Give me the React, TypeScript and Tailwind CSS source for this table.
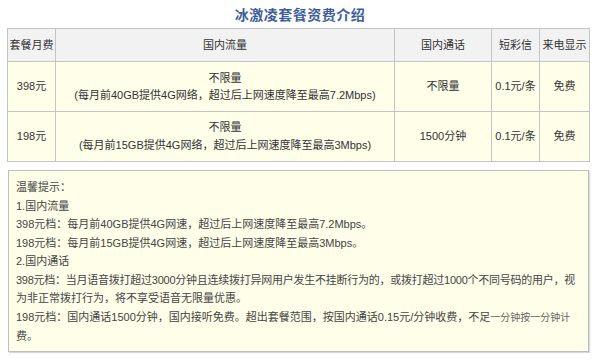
import React from "react";

const font = { fontFamily: '"Liberation Sans", "Noto Sans CJK SC", sans-serif' };

export default function App() {
  const td = "border border-[#c4c4c4] text-center align-middle p-0";
  return (
    <div className="w-[600px] h-[360px] bg-white overflow-hidden text-[11px] text-[#333]" style={font}>
      <div className="h-[28px] flex items-center justify-center pt-[0px]">
        <span className="text-[14px] font-bold text-[#3d5d9c] tracking-[0.5px]" style={{ fontFamily: '"Noto Sans CJK SC", serif' }}>
          冰激凌套餐资费介绍
        </span>
      </div>
      <table className="ml-[7px] border-collapse table-fixed w-[582px]">
        <colgroup>
          <col className="w-[48px]" />
          <col className="w-[339px]" />
          <col className="w-[97px]" />
          <col className="w-[48px]" />
          <col className="w-[50px]" />
        </colgroup>
        <tbody>
          <tr className="h-[33px] bg-[#f2f2f2]">
            <td className={td}>套餐月费</td>
            <td className={td}>国内流量</td>
            <td className={td}>国内通话</td>
            <td className={td}>短彩信</td>
            <td className={td}>来电显示</td>
          </tr>
          <tr className="h-[50px] bg-[#fefee9]">
            <td className={td}>398元</td>
            <td className={`${td} leading-[16.5px]`}>
              <div>不限量</div>
              <div>(每月前40GB提供4G网络，超过后上网速度降至最高7.2Mbps)</div>
            </td>
            <td className={td}>不限量</td>
            <td className={td}>0.1元/条</td>
            <td className={td}>免费</td>
          </tr>
          <tr className="h-[50px] bg-[#fefee9]">
            <td className={td}>198元</td>
            <td className={`${td} leading-[17.5px]`}>
              <div>不限量</div>
              <div>(每月前15GB提供4G网络，超过后上网速度降至最高3Mbps)</div>
            </td>
            <td className={td}>1500分钟</td>
            <td className={td}>0.1元/条</td>
            <td className={td}>免费</td>
          </tr>
        </tbody>
      </table>
      <div className="ml-[8px] mt-[8px] w-[581px] h-[182px] border border-[#bdbdbd] bg-[#fefee9] shadow-[1px_1px_1px_rgba(0,0,0,0.15)] pl-[7px] pt-[7px] text-[#454545] leading-[18.5px] whitespace-nowrap">
        <div>温馨提示：</div>
        <div>1.国内流量</div>
        <div>398元档：每月前40GB提供4G网速，超过后上网速度降至最高7.2Mbps。</div>
        <div>198元档：每月前15GB提供4G网速，超过后上网速度降至最高3Mbps。</div>
        <div>2.国内通话</div>
        <div className="tracking-[-0.25px]">398元档：当月语音拨打超过3000分钟且连续拨打异网用户发生不挂断行为的，或拨打超过1000个不同号码的用户，视</div>
        <div>为非正常拨打行为，将不享受语音无限量优惠。</div>
        <div>
          198元档：国内通话1500分钟，国内接听免费。超出套餐范围，按国内通话0.15元/分钟收费，不足<span className="text-[10px] text-[#666]">一分钟按一分钟计</span>
        </div>
        <div>费。</div>
      </div>
    </div>
  );
}
